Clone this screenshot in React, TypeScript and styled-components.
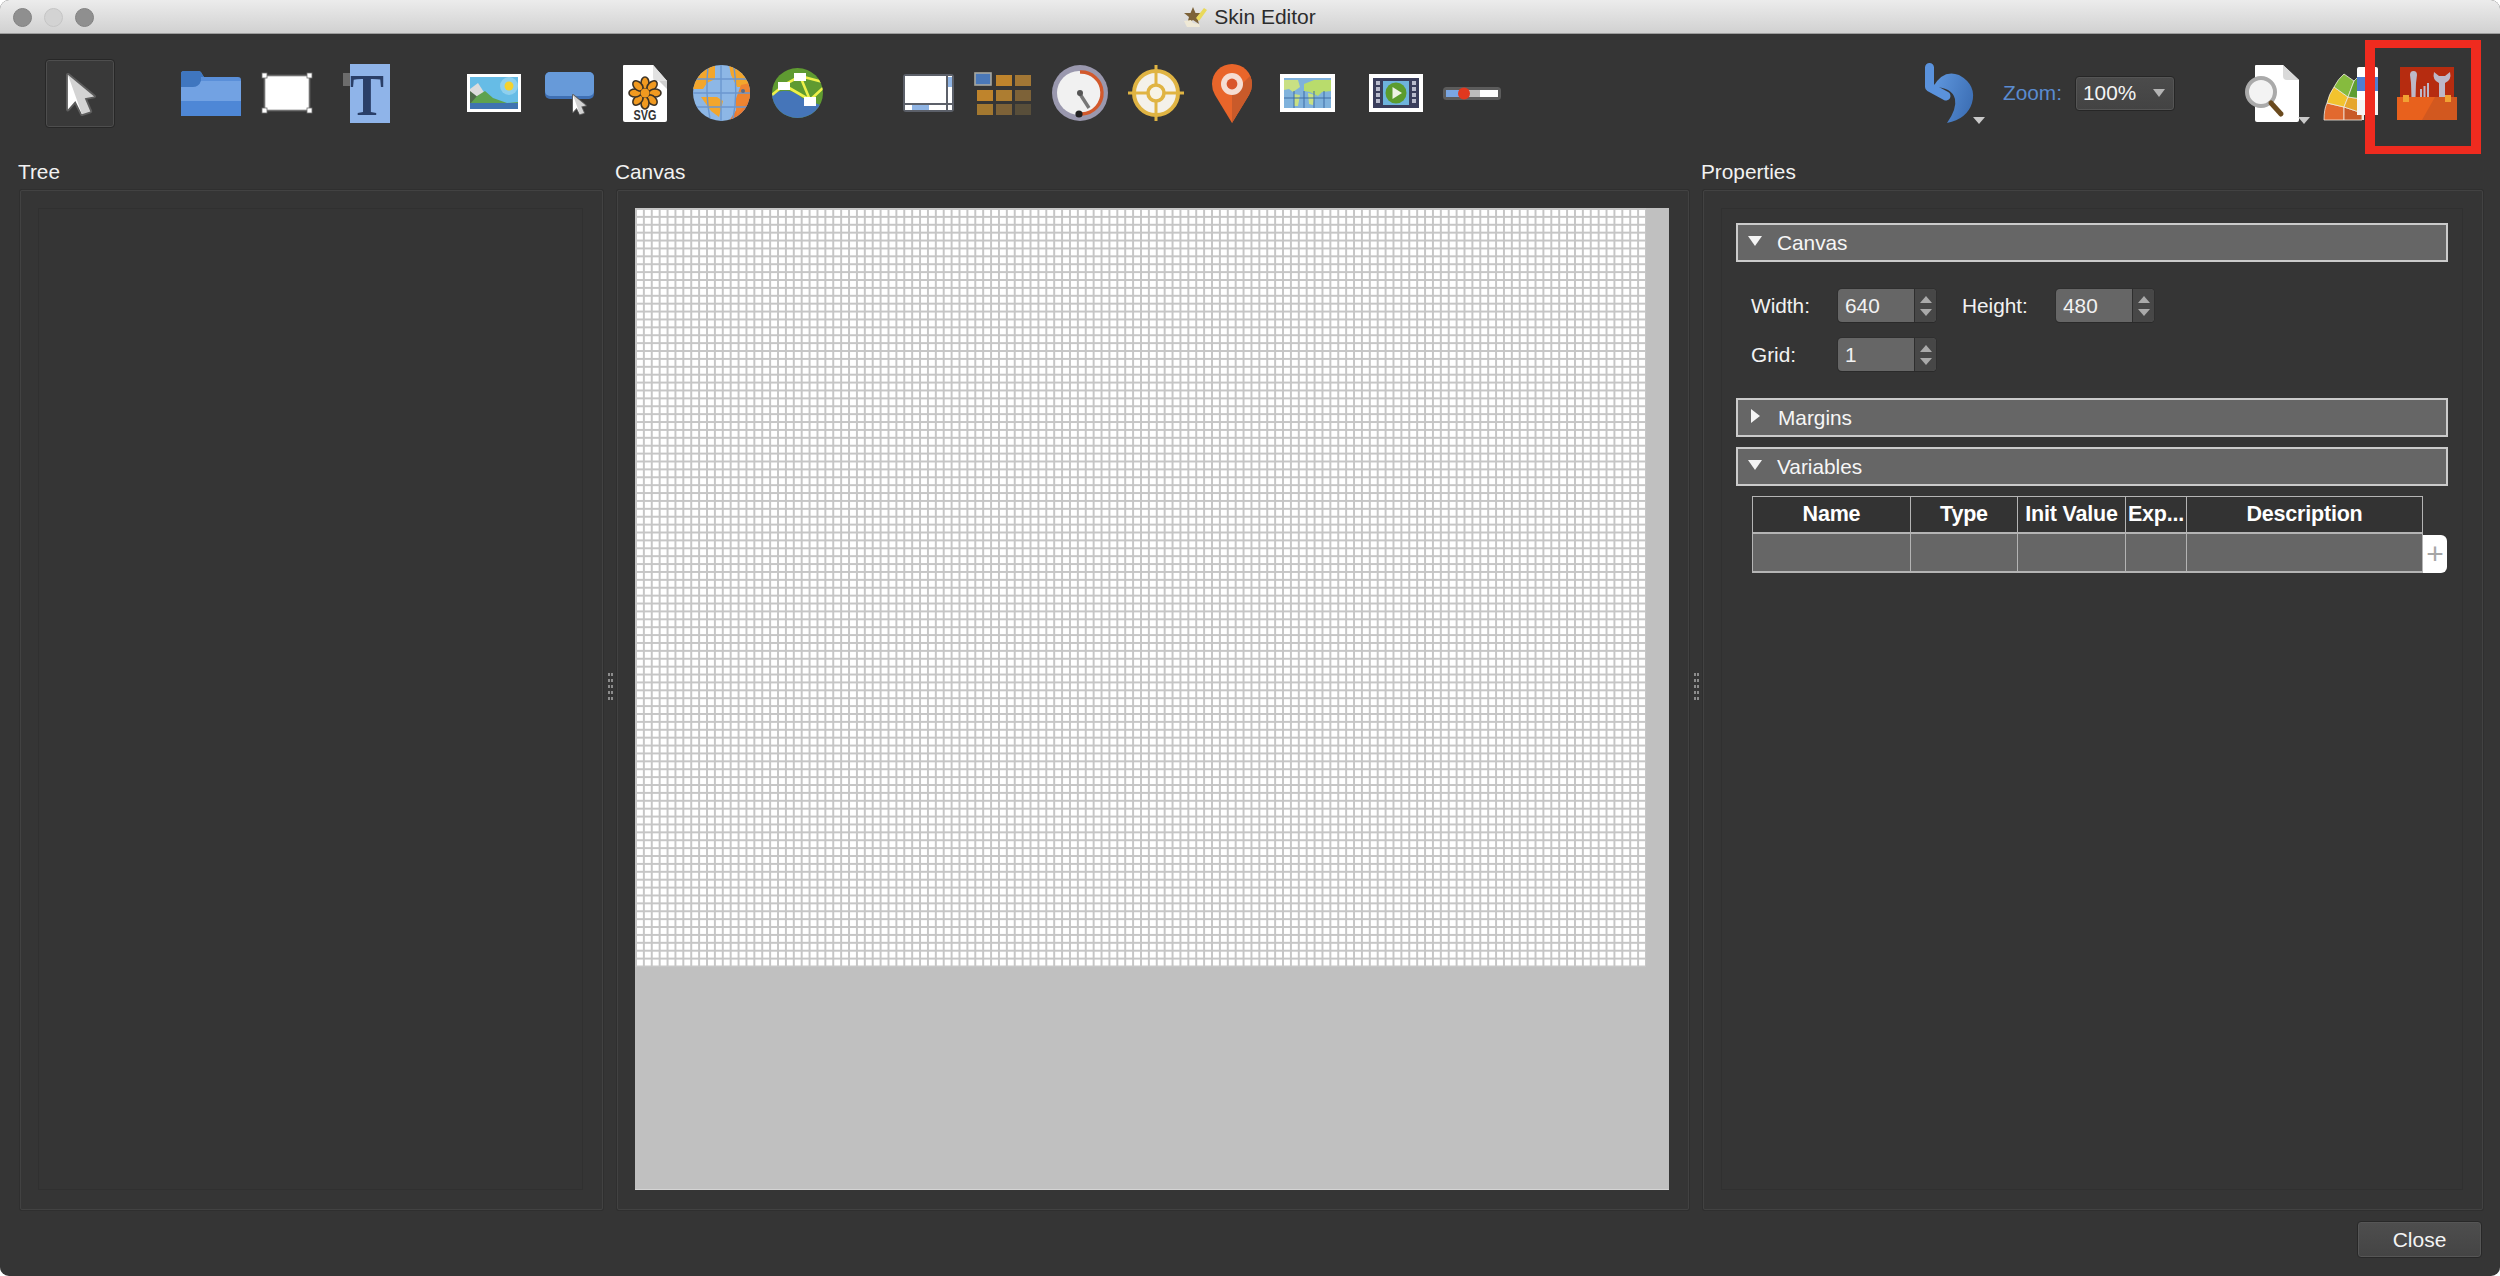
import React from "react";
import styled, { createGlobalStyle } from "styled-components";

const Global = createGlobalStyle`
  html, body {
    margin: 0;
    padding: 0;
    background: #ffffff;
    overflow: hidden;
  }
  * { box-sizing: border-box; }
`;

const Window = styled.div`
  width: 2500px;
  height: 1276px;
  display: flex;
  flex-direction: column;
  background: #353535;
  border-radius: 9px;
  overflow: hidden;
  font-family: "Liberation Sans", Arial, sans-serif;
  font-size: 20.8px;
  color: #f2f2f2;
`;

const TitleBar = styled.div`
  position: relative;
  height: 34px;
  flex-shrink: 0;
  display: flex;
  align-items: center;
  justify-content: center;
  gap: 7px;
  background: linear-gradient(#ececec, #d1d1d1);
  border-bottom: 1px solid #9c9c9c;
  color: #2c2c2c;
  font-size: 21px;
`;

const Lights = styled.div`
  position: absolute;
  left: 13px;
  top: 8px;
  display: flex;
  gap: 12px;
`;

const Light = styled.span<{ $off?: boolean }>`
  width: 19px;
  height: 19px;
  border-radius: 50%;
  background: ${(p) => (p.$off ? "#d3d3d3" : "#8f8f8f")};
  border: 1px solid ${(p) => (p.$off ? "#c4c4c4" : "#828282")};
`;

const Toolbar = styled.div`
  position: relative;
  height: 118px;
  flex-shrink: 0;
  display: flex;
  align-items: center;
  padding: 0 43px 0 45px;
`;

const Slot = styled.div<{ $gap?: number; $w: number; $h: number }>`
  flex-shrink: 0;
  width: ${(p) => p.$w}px;
  height: ${(p) => p.$h}px;
  margin-left: ${(p) => p.$gap ?? 0}px;
  svg {
    display: block;
    width: 100%;
    height: 100%;
    overflow: visible;
  }
`;

const SelectButton = styled(Slot)`
  padding: 12px 18px 10px 20px;
  background: #393939;
  border: 1px solid #272727;
  border-radius: 4px;
  box-shadow: inset 0 0 0 1px #4e4e4e;
`;

const RightTools = styled.div`
  margin-left: auto;
  display: flex;
  align-items: center;
`;

const ZoomLabel = styled.span`
  width: 72px;
  margin-left: 18px;
  color: #5a8bd0;
`;

const ZoomBox = styled.div`
  width: 100px;
  height: 35px;
  display: flex;
  align-items: center;
  justify-content: space-between;
  padding: 0 9px 0 7px;
  background: linear-gradient(#4b4b4b, #434343);
  border: 1px solid #262626;
  border-radius: 4px;
  box-shadow: inset 0 0 0 1px #555555;
  color: #f4f4f4;
`;

const DownMark = styled.span`
  width: 0;
  height: 0;
  border-left: 6px solid transparent;
  border-right: 6px solid transparent;
  border-top: 8px solid #b4b4b4;
`;

const Annotation = styled.div`
  position: absolute;
  right: 19px;
  top: 6px;
  width: 116px;
  height: 114px;
  border: solid #ef2b1f;
  border-width: 8px 10px;
`;

const Main = styled.div`
  display: flex;
  padding: 0 17px 0 20px;
`;

const Column = styled.section<{ $w: number }>`
  width: ${(p) => p.$w}px;
  flex-shrink: 0;
`;

const ColumnTitle = styled.div`
  height: 38px;
  line-height: 40px;
  margin-left: -2px;
  white-space: nowrap;
`;

const Frame = styled.div`
  height: 1020px;
  padding: 17px 19px 19px 17px;
  border: 1px solid #424242;
  border-radius: 2px;
  box-shadow: 0 0 0 1px #2f2f2f;
`;

const Well = styled.div`
  height: 100%;
  padding: 14px 14px;
  border: 1px solid #303030;
  display: flex;
  flex-direction: column;
`;

const Stage = styled.div`
  height: 100%;
  background: #c0c0c0;
  border-bottom: 1px solid #d4d4d4;
`;

const GridSheet = styled.div`
  width: 1011px;
  height: 759px;
  background-color: #ffffff;
  background-image:
    linear-gradient(to right, #c6c6c6 2px, transparent 2px),
    linear-gradient(to bottom, #c6c6c6 2px, transparent 2px);
  background-size: 7.9px 7.9px;
`;

const Splitter = styled.div`
  width: 14px;
  flex-shrink: 0;
  padding-top: 12px;
  display: flex;
  align-items: center;
  justify-content: center;
`;

const SplitterDots = styled.div`
  width: 5px;
  height: 28px;
  background-image: linear-gradient(to right, #8c8c8c 2px, transparent 2px, transparent 3px, #8c8c8c 3px);
  -webkit-mask-image: repeating-linear-gradient(to bottom, #000 0 3px, transparent 3px 6px);
  mask-image: repeating-linear-gradient(to bottom, #000 0 3px, transparent 3px 6px);
`;

const SectionHeader = styled.div<{ $gapTop?: number }>`
  height: 39px;
  flex-shrink: 0;
  margin-top: ${(p) => p.$gapTop ?? 0}px;
  display: flex;
  align-items: center;
  padding-left: 10px;
  gap: 15px;
  background: #666666;
  border: 2px solid #cbcbcb;
  color: #f6f6f6;
`;

const Caret = styled.span<{ $open?: boolean }>`
  width: 0;
  height: 0;
  margin-top: -3px;
  ${(p) =>
    p.$open
      ? `border-left: 7px solid transparent; border-right: 7px solid transparent; border-top: 10px solid #f4f4f4;`
      : `margin-left: 3px; margin-right: 3px; border-top: 7px solid transparent; border-bottom: 7px solid transparent; border-left: 9px solid #f4f4f4;`}
`;

const FormRow = styled.div<{ $gapTop: number }>`
  display: flex;
  align-items: center;
  height: 33px;
  flex-shrink: 0;
  margin-top: ${(p) => p.$gapTop}px;
  padding-left: 15px;
`;

const FieldLabel = styled.span<{ $w: number; $gap?: number }>`
  width: ${(p) => p.$w}px;
  margin-left: ${(p) => p.$gap ?? 0}px;
`;

const Spin = styled.div`
  width: 98px;
  height: 33px;
  display: flex;
  border-radius: 4px;
  background: #666666;
  overflow: hidden;
  box-shadow: 0 1px 0 #2a2a2a, 0 0 0 1px #2f2f2f;
`;

const SpinValue = styled.div`
  flex: 1;
  padding-left: 7px;
  line-height: 33px;
`;

const SpinSteps = styled.div`
  width: 22px;
  display: flex;
  flex-direction: column;
  align-items: center;
  justify-content: center;
  gap: 6px;
  background: #474747;
  border-left: 1px solid #2e2e2e;
`;

const StepMark = styled.span<{ $up?: boolean }>`
  width: 0;
  height: 0;
  border-left: 6px solid transparent;
  border-right: 6px solid transparent;
  ${(p) => (p.$up ? "border-bottom: 7px solid #aaaaaa;" : "border-top: 7px solid #aaaaaa;")}
`;

const TableRow = styled.div`
  display: flex;
  align-items: flex-end;
  margin: 10px 0 0 16px;
  flex-shrink: 0;
`;

const Table = styled.div`
  width: 671px;
  display: grid;
  grid-template-columns: 158px 107px 108px 61px 236px;
  grid-template-rows: 37px 39px;
  border-top: 1px solid #b4b4b4;
  border-left: 1px solid #b4b4b4;
`;

const HeadCell = styled.div`
  display: flex;
  align-items: center;
  justify-content: center;
  background: #333333;
  border-right: 1px solid #b4b4b4;
  border-bottom: 2px solid #b4b4b4;
  font-weight: 700;
  font-size: 21.5px;
  letter-spacing: -0.2px;
  color: #ffffff;
  white-space: nowrap;
  overflow: hidden;
`;

const BodyCell = styled.div`
  background: #666666;
  border-right: 1px solid #b4b4b4;
  border-bottom: 2px solid #b4b4b4;
`;

const AddButton = styled.div`
  width: 24px;
  height: 38px;
  display: flex;
  align-items: center;
  justify-content: center;
  background: #ffffff;
  border-radius: 0 6px 6px 0;
  color: #a6a6a6;
  font-size: 30px;
  line-height: 1;
`;

const Footer = styled.div`
  flex: 1;
  display: flex;
  justify-content: flex-end;
  align-items: flex-start;
  padding: 11px 18px 0 0;
`;

const CloseButton = styled.button`
  width: 125px;
  height: 37px;
  padding: 0;
  background: linear-gradient(#4e4e4e, #444444);
  border: 1px solid #282828;
  border-radius: 4px;
  box-shadow: inset 0 0 0 1px #565656;
  color: #f4f4f4;
  font-family: inherit;
  font-size: 21px;
`;

const Tri = ({ x, y }: { x: number; y: number }) => (
  <path d={`M${x} ${y}h12l-6 7z`} fill="#c9c9c9" />
);

const MouseArrow = ({ x = 0, y = 0, s = 1 }: { x?: number; y?: number; s?: number }) => (
  <g transform={`translate(${x} ${y}) scale(${s})`}>
    <path d="M0 0L28 23 L18 25 L24 39 L15 42 L8 28 L0 37Z" fill="#5d5d5d" stroke="#5d5d5d" strokeWidth="4" strokeLinejoin="round" />
    <path d="M0 0V37L8 28 L15 42 L16 28Z" fill="#ffffff" />
    <path d="M0 0L28 23 L18 25 L24 39 L15 42 L10 28Z" fill="#d3d3d3" />
  </g>
);

const SelectGlyph = () => (
  <svg viewBox="-2 -2 32 46">
    <MouseArrow />
  </svg>
);

const FolderIcon = () => (
  <svg viewBox="0 0 60 45">
    <path d="M0 3Q0 0 3 0H17Q20 0 21 3L23 6H57Q60 6 60 9V30H0Z" fill="#5a8fd9" />
    <path d="M0 3Q0 0 3 0H17Q20 0 21 3L23 6H20V10Q18 16 12 16H0Z" fill="#3f76bf" />
    <path d="M0 16H12Q18 16 20 10H60V30H0Z" fill="#72a2e3" />
    <rect y="30" width="60" height="15" fill="#4e87d6" />
  </svg>
);

const RectIcon = () => (
  <svg viewBox="0 0 50 40">
    <rect x="2.5" y="2.5" width="45" height="35" fill="#ffffff" stroke="#6e6e6e" strokeWidth="1.6" />
    {[
      [0, 0],
      [45, 0],
      [0, 35],
      [45, 35],
    ].map(([x, y]) => (
      <rect key={`${x}-${y}`} x={x} y={y} width="5" height="5" fill="#ffffff" stroke="#6e6e6e" strokeWidth="0.8" />
    ))}
  </svg>
);

const TextIcon = () => (
  <svg viewBox="0 0 47 59">
    <rect x="7" width="40" height="59" fill="#8fb4e9" />
    <rect y="9" width="7" height="13" fill="#6c6c6c" />
    <text x="24" y="51" textAnchor="middle" fontFamily="Liberation Serif" fontWeight="700" fontSize="60" textLength="34" lengthAdjust="spacingAndGlyphs" fill="#2a3f68">T</text>
  </svg>
);

const ImageIcon = () => (
  <svg viewBox="0 0 54 38">
    <rect width="54" height="38" fill="#ffffff" />
    <rect x="3" y="3" width="48" height="32" fill="#66bce6" />
    <circle cx="42" cy="12" r="9" fill="#8ed0ee" />
    <circle cx="42" cy="12" r="4.5" fill="#f4d22e" />
    <path d="M3 15L11 9L22 26L3 30Z" fill="#dcdcdc" />
    <path d="M3 17L12 24L16 30H3Z" fill="#4e6b4a" />
    <path d="M10 22L18 17L26 24L40 29L51 28V35H3V30Z" fill="#5ea24e" />
    <rect x="3" y="29" width="48" height="6" fill="#3f73b0" />
  </svg>
);

const ButtonIcon = () => (
  <svg viewBox="0 0 49 42">
    <rect width="49" height="27" rx="5" fill="#3f70b4" />
    <rect width="49" height="24" rx="5" fill="#679ad9" />
    <MouseArrow x={28} y={23} s={0.46} />
  </svg>
);

const SvgDocIcon = () => (
  <svg viewBox="0 0 44 57">
    <path d="M1 0H30L44 16V55Q44 57 42 57H2Q0 57 0 55V1Q0 0 1 0Z" fill="#ffffff" />
    <path d="M30 0L44 16V24L32 12Q30 8 30 0Z" fill="#cfcfcf" />
    <path d="M30 0L44 16H33Q30 16 30 12Z" fill="#e2e2e2" />
    <g fill="#f19a20" stroke="#3d3326" strokeWidth="1.6">
      {[0, 45, 90, 135, 180, 225, 270, 315].map((a) => (
        <ellipse key={a} cx="22" cy="18" rx="4" ry="6" transform={`rotate(${a} 22 28)`} />
      ))}
    </g>
    <circle cx="22" cy="28" r="4.5" fill="#f19a20" />
    <text x="22" y="55" textAnchor="middle" fontFamily="Liberation Sans" fontWeight="700" fontSize="15" textLength="23" lengthAdjust="spacingAndGlyphs" fill="#333333">SVG</text>
  </svg>
);

const GlobeIcon = () => (
  <svg viewBox="0 0 57 56">
    <defs>
      <clipPath id="globe-clip">
        <ellipse cx="28.5" cy="28" rx="28.5" ry="28" />
      </clipPath>
    </defs>
    <g clipPath="url(#globe-clip)">
      <rect width="57" height="56" fill="#8db7e6" />
      <path d="M0 0H22V14L14 18L10 24H0Z" fill="#f3a62c" />
      <path d="M8 32H24L30 36L26 52L18 46Z" fill="#f3a62c" />
      <path d="M36 0H57V22H44L38 10Z" fill="#f3a62c" />
      <path d="M57 24L36 56H57Z" fill="#ec7a30" />
      <path d="M48 20L57 18V34L44 50L42 36Z" fill="#ee8431" />
      <g stroke="#6b97cf" strokeWidth="1.4" fill="none">
        <path d="M28 0V56M15 2Q12 28 17 54M41 2Q45 28 40 54M0 14H57M0 28H57M0 42H57" />
      </g>
      <circle cx="50" cy="26" r="2" fill="#5d6e8a" />
    </g>
  </svg>
);

const NetworkIcon = () => (
  <svg viewBox="0 0 51 50">
    <defs>
      <clipPath id="net-clip">
        <ellipse cx="25.5" cy="25" rx="25.5" ry="25" />
      </clipPath>
    </defs>
    <g clipPath="url(#net-clip)">
      <rect width="51" height="50" fill="#5f9a31" />
      <path d="M0 26Q18 18 30 30L51 38V50H0Z" fill="#4575b9" />
      <g stroke="#eef04a" strokeWidth="2.6" fill="none">
        <path d="M0 27L12 17L28 8L38 32M28 8L51 14M12 17L38 32M38 32L51 20" />
      </g>
      <rect x="6" y="14" width="12" height="8" fill="#ffffff" />
      <rect x="22" y="5" width="12" height="8" fill="#ffffff" />
      <rect x="32" y="29" width="12" height="9" fill="#ffffff" />
    </g>
  </svg>
);

const ScrollIcon = () => (
  <svg viewBox="0 0 51 38">
    <rect width="51" height="38" rx="3" fill="#5c6069" />
    <rect x="2" y="2" width="41" height="27" fill="#ffffff" />
    <rect x="45" y="2" width="4" height="27" fill="#ffffff" />
    <rect x="45" y="3" width="4" height="10" fill="#8fb4e4" />
    <rect x="2" y="31" width="41" height="5" fill="#ffffff" />
    <rect x="9" y="31" width="17" height="5" fill="#8fb4e4" />
    <rect x="45" y="31" width="4" height="5" fill="#ffffff" />
  </svg>
);

const gridCells = [
  [22, 3, "#bf842c"],
  [41, 3, "#a27735"],
  [3, 18, "#bf842c"],
  [22, 18, "#ad7d31"],
  [41, 18, "#7d6238"],
  [3, 32, "#a37830"],
  [22, 32, "#7d6238"],
  [41, 32, "#584e3a"],
] as const;

const GridIcon = () => (
  <svg viewBox="0 0 58 43">
    {gridCells.map(([x, y, c]) => (
      <rect key={`${x}-${y}`} x={x} y={y} width="16" height="11" fill={c} />
    ))}
    <rect x="1" y="1" width="16" height="12" fill="#4a78b8" stroke="#a8a8a0" strokeWidth="1.6" />
  </svg>
);

const GaugeIcon = () => (
  <svg viewBox="0 0 56 56">
    <circle cx="28" cy="28" r="28" fill="#9a98ae" />
    <circle cx="27" cy="28" r="22" fill="#f1f1f1" />
    <path d="M28 7A21 21 0 0 1 30 49" fill="none" stroke="#d2592c" strokeWidth="3.4" />
    <path d="M28 29L37 43" stroke="#777777" strokeWidth="3.4" />
    <circle cx="28" cy="28" r="3" fill="#555555" />
    <circle cx="27" cy="49" r="3.6" fill="#222222" />
  </svg>
);

const TargetIcon = () => (
  <svg viewBox="0 0 56 56">
    <circle cx="28" cy="28" r="22" fill="#f4f1ea" stroke="#e0b443" strokeWidth="4" />
    <path d="M28 0V56M0 28H56" stroke="#e0b443" strokeWidth="3" />
    <circle cx="28" cy="28" r="8" fill="#f7f3e6" stroke="#e0b443" strokeWidth="3.6" />
  </svg>
);

const PinIcon = () => (
  <svg viewBox="0 0 40 59">
    <path d="M20 59L3 31Q0 26 0 20A20 20 0 0 1 40 20Q40 26 37 31Z" fill="#e9652a" />
    <path d="M20 59V30L38 12Q40 16 40 20Q40 26 37 31Z" fill="#c95a2a" />
    <circle cx="20" cy="20" r="11" fill="#f5ddd2" />
    <circle cx="20" cy="20" r="5.4" fill="#d9552a" />
  </svg>
);

const MapIcon = () => (
  <svg viewBox="0 0 55 38">
    <rect width="55" height="38" fill="#ffffff" />
    <rect x="4" y="4" width="47" height="30" fill="#7fb2dc" />
    <path d="M4 6H18L20 13L13 18L9 15L4 16Z" fill="#c9e083" />
    <path d="M14 20L20 21L18 32H14Z" fill="#c9e083" />
    <path d="M24 10L34 6L51 6V17L42 18L38 22L30 18L24 17Z" fill="#b9dc6c" />
    <path d="M28 19L35 21L33 31L29 30Z" fill="#c9e083" />
    <path d="M4 24H51M14 17V34M24 17V34M34 17V34M44 17V34" stroke="#3e6da5" strokeWidth="1" />
  </svg>
);

const VideoIcon = () => (
  <svg viewBox="0 0 54 38">
    <rect width="54" height="38" fill="#ffffff" />
    <rect x="4" y="4" width="46" height="30" fill="#3a3e5c" />
    <rect x="14" y="7" width="26" height="24" fill="#6eb4dc" />
    {[7, 13, 19, 25].map((y) => (
      <g key={y} fill="#b9bccd">
        <rect x="7" y={y} width="4" height="4" />
        <rect x="43" y={y} width="4" height="4" />
      </g>
    ))}
    <circle cx="27" cy="19" r="10.5" fill="#5c9c2e" />
    <path d="M23.5 13V25L33 19Z" fill="#eef2e4" />
  </svg>
);

const SliderIcon = () => (
  <svg viewBox="0 0 58 13">
    <rect width="58" height="13" rx="3.5" fill="#5c5c5c" />
    <rect x="3" y="3" width="20" height="7" fill="#7aa6e2" />
    <rect x="23" y="3" width="15" height="7" fill="#bdbdbd" />
    <rect x="37" y="3" width="18" height="7" fill="#ffffff" />
    <circle cx="21" cy="6.5" r="6" fill="#e0381f" />
  </svg>
);

const UndoIcon = () => (
  <svg viewBox="0 0 60 60">
    <defs>
      <linearGradient id="undo-fill" x1="0" x2="1" y1="0" y2="0.4">
        <stop offset="0" stopColor="#6199e0" />
        <stop offset="1" stopColor="#3f72b8" />
      </linearGradient>
    </defs>
    <path d="M8 24Q18 6 34 12Q52 22 47 40Q42 56 22 60Q32 46 30 36Q27 24 8 24Z" fill="url(#undo-fill)" />
    <path d="M4.5 4.5V24L21 33" fill="none" stroke="#5a92dc" strokeWidth="9" strokeLinecap="round" strokeLinejoin="round" />
    <Tri x={48} y={54} />
  </svg>
);

const SearchDocIcon = () => (
  <svg viewBox="0 0 65 57">
    <path d="M10 1Q10 0 11 0H38L54 15V55Q54 57 52 57H12Q10 57 10 55Z" fill="#ffffff" />
    <path d="M38 0L54 15H42Q38 15 38 11Z" fill="#d9d9d9" />
    <ellipse cx="16" cy="27" rx="14" ry="14" fill="#f3f3f3" stroke="#aaaaaa" strokeWidth="4" />
    <path d="M26 38L36 49" stroke="#6a4a1e" strokeWidth="5" strokeLinecap="round" />
    <Tri x={53} y={52} />
  </svg>
);

const PaletteIcon = () => (
  <svg viewBox="0 0 54 53">
    <path d="M34 44H40V53H20Z" fill="#eeeae2" />
    <path d="M0 53Q0 42 3 36L20 40V53Z" fill="#e2692e" stroke="#f0ebe2" strokeWidth="0.8" />
    <path d="M20 40L38 46V53H20Z" fill="#c85a28" stroke="#f0ebe2" strokeWidth="0.8" />
    <path d="M3 36Q5 27 10 20L24 30L20 40Z" fill="#f2c32e" stroke="#f0ebe2" strokeWidth="0.8" />
    <path d="M24 30L38 32V46L20 40Z" fill="#e6a62c" stroke="#f0ebe2" strokeWidth="0.8" />
    <path d="M10 20Q14 12 20 7L30 14L24 30Z" fill="#86bb3e" stroke="#f0ebe2" strokeWidth="0.8" />
    <path d="M30 14L34 10V32H38L24 30Z" fill="#5f9e30" stroke="#f0ebe2" strokeWidth="0.8" />
    <rect x="33" width="21" height="48" rx="2" fill="#ffffff" />
    <rect x="33" y="10" width="21" height="14" fill="#4f7fd2" />
    <rect x="33" y="33" width="21" height="15" fill="#f4f4f4" />
  </svg>
);

const ToolboxIcon = () => (
  <svg viewBox="0 0 60 53">
    <rect x="3" width="54" height="34" fill="#b62c10" />
    <g fill="#bdb8c8">
      <path d="M13 8Q13 4 16.5 4Q20 4 20 8L19 16L18.5 32H14.5L14 16Z" />
      <rect x="23" y="22" width="2" height="10" />
      <rect x="26.5" y="19" width="2" height="13" />
      <rect x="30" y="16" width="2" height="16" />
      <path d="M37 5Q35 13 42 16V32H48V16Q55 13 53 5L48 9H42Z" />
    </g>
    <rect y="30" width="60" height="23" fill="#e8611d" />
    <path d="M38 30H60V53H25Z" fill="#d2581f" />
    <rect x="6" y="28" width="6" height="7" fill="#f1a233" />
    <rect x="48" y="28" width="6" height="7" fill="#f1a233" />
  </svg>
);

const AppBadge = () => (
  <svg width="23" height="21" viewBox="0 0 23 21">
    <path d="M9 1L11.5 7L18 7L13 11L15 18L9 14L3 18L5 11L0 7L6.5 7Z" fill="#7c6238" />
    <path d="M12 12L20 2L23 4L15 15Z" fill="#e9d95a" />
    <path d="M0 15L7 14L9 17L15 18L16 21H3Z" fill="#efe9d6" />
  </svg>
);

const Stepper = () => (
  <SpinSteps>
    <StepMark $up />
    <StepMark />
  </SpinSteps>
);

const headings = ["Name", "Type", "Init Value", "Exp...", "Description"];

export default function App() {
  return (
    <>
      <Global />
      <Window>
        <TitleBar>
          <Lights>
            <Light />
            <Light $off />
            <Light />
          </Lights>
          <AppBadge />
          <span>Skin Editor</span>
        </TitleBar>

        <Toolbar>
          <SelectButton $w={70} $h={69}>
            <SelectGlyph />
          </SelectButton>
          <Slot $gap={66} $w={60} $h={45}><FolderIcon /></Slot>
          <Slot $gap={21} $w={50} $h={40}><RectIcon /></Slot>
          <Slot $gap={31} $w={47} $h={59}><TextIcon /></Slot>
          <Slot $gap={77} $w={54} $h={38}><ImageIcon /></Slot>
          <Slot $gap={24} $w={49} $h={42}><ButtonIcon /></Slot>
          <Slot $gap={29} $w={44} $h={57}><SvgDocIcon /></Slot>
          <Slot $gap={26} $w={57} $h={56}><GlobeIcon /></Slot>
          <Slot $gap={22} $w={51} $h={50}><NetworkIcon /></Slot>
          <Slot $gap={80} $w={51} $h={38}><ScrollIcon /></Slot>
          <Slot $gap={20} $w={58} $h={43}><GridIcon /></Slot>
          <Slot $gap={20} $w={56} $h={56}><GaugeIcon /></Slot>
          <Slot $gap={20} $w={56} $h={56}><TargetIcon /></Slot>
          <Slot $gap={28} $w={40} $h={59}><PinIcon /></Slot>
          <Slot $gap={28} $w={55} $h={38}><MapIcon /></Slot>
          <Slot $gap={34} $w={54} $h={38}><VideoIcon /></Slot>
          <Slot $gap={20} $w={58} $h={13}><SliderIcon /></Slot>

          <RightTools>
            <Slot $w={60} $h={60}><UndoIcon /></Slot>
            <ZoomLabel>Zoom:</ZoomLabel>
            <ZoomBox>
              100%
              <DownMark />
            </ZoomBox>
            <Slot $gap={70} $w={65} $h={57}><SearchDocIcon /></Slot>
            <Slot $gap={14} $w={54} $h={53}><PaletteIcon /></Slot>
            <Slot $gap={19} $w={60} $h={53}><ToolboxIcon /></Slot>
          </RightTools>
          <Annotation />
        </Toolbar>

        <Main>
          <Column $w={583}>
            <ColumnTitle>Tree</ColumnTitle>
            <Frame>
              <Well />
            </Frame>
          </Column>
          <Splitter>
            <SplitterDots />
          </Splitter>
          <Column $w={1072}>
            <ColumnTitle>Canvas</ColumnTitle>
            <Frame>
              <Stage>
                <GridSheet />
              </Stage>
            </Frame>
          </Column>
          <Splitter>
            <SplitterDots />
          </Splitter>
          <Column $w={780}>
            <ColumnTitle>Properties</ColumnTitle>
            <Frame>
              <Well>
                <SectionHeader>
                  <Caret $open />
                  Canvas
                </SectionHeader>
                <FormRow $gapTop={27}>
                  <FieldLabel $w={87}>Width:</FieldLabel>
                  <Spin>
                    <SpinValue>640</SpinValue>
                    <Stepper />
                  </Spin>
                  <FieldLabel $gap={26} $w={94}>Height:</FieldLabel>
                  <Spin>
                    <SpinValue>480</SpinValue>
                    <Stepper />
                  </Spin>
                </FormRow>
                <FormRow $gapTop={16}>
                  <FieldLabel $w={87}>Grid:</FieldLabel>
                  <Spin>
                    <SpinValue>1</SpinValue>
                    <Stepper />
                  </Spin>
                </FormRow>
                <SectionHeader $gapTop={27}>
                  <Caret />
                  Margins
                </SectionHeader>
                <SectionHeader $gapTop={10}>
                  <Caret $open />
                  Variables
                </SectionHeader>
                <TableRow>
                  <Table>
                    {headings.map((h) => (
                      <HeadCell key={h}>{h}</HeadCell>
                    ))}
                    {headings.map((h) => (
                      <BodyCell key={h} />
                    ))}
                  </Table>
                  <AddButton>+</AddButton>
                </TableRow>
              </Well>
            </Frame>
          </Column>
        </Main>

        <Footer>
          <CloseButton>Close</CloseButton>
        </Footer>
      </Window>
    </>
  );
}
